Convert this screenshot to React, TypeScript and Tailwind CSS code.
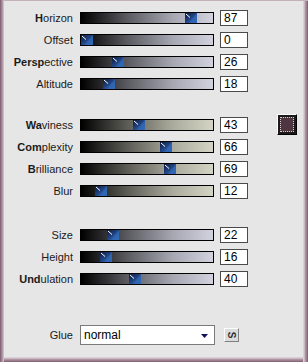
import React from 'react';

type Row = { label: string; bold: string; value: number };

const group1: Row[] = [
  { label: 'Horizon', bold: 'H', value: 87 },
  { label: 'Offset', bold: '', value: 0 },
  { label: 'Perspective', bold: 'Persp', value: 26 },
  { label: 'Altitude', bold: '', value: 18 },
];

const group2: Row[] = [
  { label: 'Waviness', bold: 'Wa', value: 43 },
  { label: 'Complexity', bold: 'Com', value: 66 },
  { label: 'Brilliance', bold: 'B', value: 69 },
  { label: 'Blur', bold: '', value: 12 },
];

const group3: Row[] = [
  { label: 'Size', bold: '', value: 22 },
  { label: 'Height', bold: '', value: 16 },
  { label: 'Undulation', bold: 'Und', value: 40 },
];

function Thumb({ value }: { value: number }) {
  // track inner width 132, thumb 12
  const left = Math.round((value / 100) * 120);
  return (
    <svg
      width="12"
      height="10"
      viewBox="0 0 12 10"
      className="absolute top-0"
      style={{ left }}
    >
      <defs>
        <linearGradient id="tg" x1="0" y1="0" x2="1" y2="1">
          <stop offset="0" stopColor="#0d1a38" />
          <stop offset="0.45" stopColor="#1f3f7c" />
          <stop offset="1" stopColor="#4080d0" />
        </linearGradient>
      </defs>
      <rect x="0" y="0" width="12" height="10" fill="url(#tg)" />
      <polygon points="12,0 12,10 4,10" fill="#2f66b4" opacity="0.8" />
      <line x1="1" y1="1" x2="5" y2="4.5" stroke="#ffffff" strokeWidth="1" />
    </svg>
  );
}

function SliderRow({ row, tint, extra }: { row: Row; tint: string; extra?: React.ReactNode }) {
  const rest = row.label.slice(row.bold.length);
  return (
    <div className="flex items-center h-[22px]">
      <div className="w-[69px] text-right text-[11px] text-[#1a1a1a] leading-none">
        {row.bold && <span className="font-bold">{row.bold}</span>}
        {rest}
      </div>
      <div
        className={`relative ml-[7px] w-[134px] h-[12px] border border-black ${tint}`}
      >
        <Thumb value={row.value} />
      </div>
      <div className="ml-[6px] w-[28px] h-[16px] bg-white border border-[#4a4a4a] text-[12px] leading-[14px] pl-[3px] text-black">
        {row.value}
      </div>
      {extra}
    </div>
  );
}

const blueTint = 'bg-[linear-gradient(to_right,#000000,#5a5a60_35%,#a8a8b4_70%,#d2d2de)]';
const beigeTint = 'bg-[linear-gradient(to_right,#000000,#5c5c56_35%,#acac9e_70%,#d4d4c4)]';

export default function App() {
  return (
    <div
      className="w-[308px] h-[362px] bg-[#e6e6e6] pl-[4px] pt-[1px] shadow-[inset_1px_0_0_#86687a,inset_2px_0_0_#9c8090,inset_3px_0_0_#b49aa8,inset_4px_0_0_#cbbcc4,inset_0_1px_0_#c4b0ba,inset_-1px_0_0_#86687a,inset_-2px_0_0_#9c8090,inset_-3px_0_0_#ae94a2,inset_-4px_0_0_#c8b8c0,inset_-5px_0_0_#d8d0d4,inset_0_-1px_0_#86687a,inset_0_-2px_0_#9c8090,inset_0_-3px_0_#ae94a2,inset_0_-4px_0_#c8b8c0,inset_0_-5px_0_#d8d0d4]"
      style={{ fontFamily: '"Liberation Sans", Arial, sans-serif' }}
    >
      <div className="pt-[6px] flex flex-col">
        {group1.map((r) => (
          <SliderRow key={r.label} row={r} tint={blueTint} />
        ))}
        <div className="h-[19px]" />
        {group2.map((r, i) => (
          <SliderRow
            key={r.label}
            row={r}
            tint={beigeTint}
            extra={
              i === 0 ? (
                <div className="ml-[29px] w-[20px] h-[21px] border border-black border-t-white border-l-white bg-[#1a1a1a] p-[2px] -mt-[2px]">
                  <div className="w-full h-full bg-[#4e3640] border border-dotted border-[#d8c8d0]" />
                </div>
              ) : null
            }
          />
        ))}
        <div className="h-[22px]" />
        {group3.map((r) => (
          <SliderRow key={r.label} row={r} tint={blueTint} />
        ))}
        <div className="h-[34px]" />
        <div className="flex items-center h-[22px]">
          <div className="w-[69px] text-right text-[11px] text-[#1a1a1a] leading-none">Glue</div>
          <div className="relative ml-[7px] w-[135px] h-[20px] bg-white border border-[#7a7a7a] flex items-center pl-[3px] text-[12px] text-black">
            normal
            <svg width="7" height="4" viewBox="0 0 7 4" className="absolute right-[6px] top-[8px]">
              <polygon points="0,0 7,0 3.5,4" fill="#101060" />
            </svg>
          </div>
          <div className="ml-[9px] w-[15px] h-[14px] bg-[#dcdcdc] border border-t-white border-l-white border-r-[#808080] border-b-[#808080] flex items-center justify-center">
            <span className="text-[10px] font-bold leading-none text-[#303030] rotate-90">S</span>
          </div>
        </div>
      </div>
    </div>
  );
}
